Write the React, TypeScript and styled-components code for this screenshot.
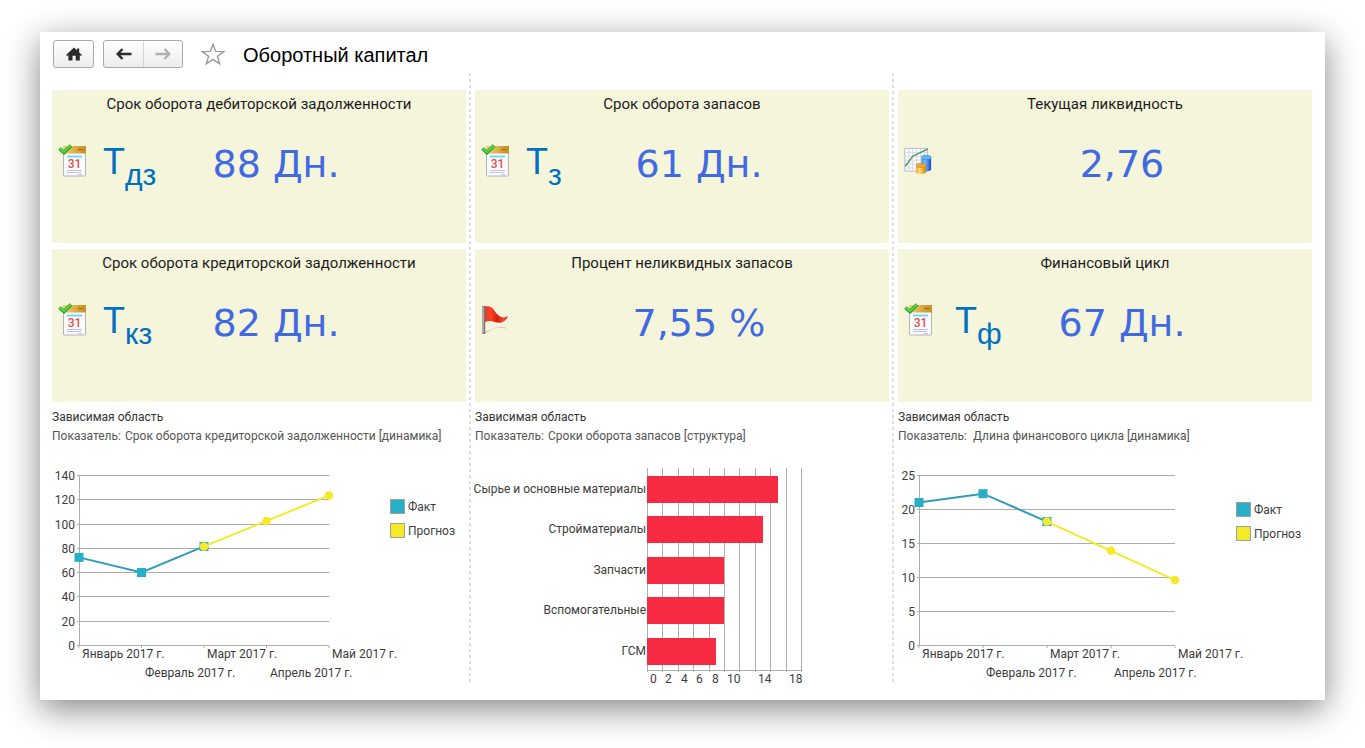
import React from "react";
import styled, { createGlobalStyle } from "styled-components";

const GlobalStyle = createGlobalStyle`
  *, *::before, *::after { box-sizing: border-box; }
  body {
    margin: 0;
    background: #fff;
    color: #333;
    font-family: Roboto, "Liberation Sans", sans-serif;
    font-size: 12px;
    line-height: 20px;
  }
  h1, h2, p { margin: 0; font-weight: 400; }
`;

const Window = styled.main`
  margin: 32px 40px 48px;
  padding: 8px 13px 16px 12px;
  background: #fff;
  box-shadow: 0 9px 32px rgba(0, 0, 0, 0.48);
`;

const Toolbar = styled.header`
  display: flex;
  align-items: center;
  height: 33px;
  padding: 0 0 5px 1px;
`;

const ButtonGroup = styled.div`
  display: flex;
  height: 28px;
  margin-right: 9px;
  border: 1px solid #a9a9a9;
  border-radius: 3px;
  background: linear-gradient(#fff, #ececec);
  overflow: hidden;
`;

const ToolButton = styled.button`
  display: flex;
  align-items: center;
  justify-content: center;
  width: 39px;
  padding: 0;
  border: 0;
  background: none;
  & + & { border-left: 1px solid #d4d4d4; }
`;

const StarButton = styled.button`
  display: flex;
  margin: 0 18px 0 9px;
  padding: 0;
  border: 0;
  background: none;
`;

const Title = styled.h1`
  padding-top: 2px;
  color: #000;
  font-family: "Liberation Sans", Arial, sans-serif;
  font-size: 20px;
  line-height: 28px;
`;

const Board = styled.div`
  display: grid;
  grid-template-columns: minmax(0, 1fr) 9px minmax(0, 1fr) 9px minmax(0, 1fr);
`;

const Divider = styled.div`
  width: 2px;
  margin-left: 3px;
  background: repeating-linear-gradient(#dedede 0 3px, transparent 3px 6px);
`;

const Column = styled.section`
  display: flex;
  flex-direction: column;
  padding-top: 17px;
`;

const Card = styled.article`
  height: 153px;
  margin-bottom: 6px;
  padding-top: 4px;
  background: #f5f5dc;
`;

const CardTitle = styled.h2`
  color: #1c1c1c;
  font-size: 15px;
  line-height: 20px;
  text-align: center;
`;

const CardBody = styled.div`
  display: grid;
  grid-template-columns: 34px 84px minmax(0, 1fr) 84px;
  align-items: center;
  height: 100px;
`;

const IconCell = styled.div`
  display: flex;
  padding: 0 0 6px 6px;
`;

const Symbol = styled.div<{ $indent: number }>`
  grid-column: 2;
  padding: 0 0 4px ${(p) => p.$indent}px;
  color: #0070c0;
  font-family: "Liberation Sans", Arial, sans-serif;
  font-size: 36px;
  line-height: 40px;
  white-space: nowrap;
  sub {
    font-size: 30px;
    line-height: 0;
    vertical-align: -11px;
  }
`;

const Value = styled.p`
  grid-column: 3;
  color: #4169e1;
  font-family: "DejaVu Sans", Verdana, sans-serif;
  font-size: 38px;
  line-height: 48px;
  text-align: center;
  white-space: nowrap;
`;

const Caption = styled.p`
  line-height: 18px;
`;

const Indicator = styled.p<{ $gap: number }>`
  display: flex;
  gap: ${(p) => p.$gap}px;
  color: #555;
  line-height: 21px;
  white-space: nowrap;
`;

const Chart = styled.svg`
  display: block;
  width: 100%;
  height: 237px;
  overflow: visible;
  font-size: 12px;
  fill: #3c3c3c;
`;

function HomeIcon() {
  return (
    <svg width="16" height="14" viewBox="0 0 16 14" fill="#2b2b2b" aria-hidden="true">
      <path d="M8 .5 11 3.300V1.500h2.200v3.900L16 8l-1 .9-1.200-1V13.500H9.700V8.800H6.500v4.700H2.400V7.900L1.100 8.900 0 8z" />
    </svg>
  );
}

function ArrowIcon({ color, back }: { color: string; back?: boolean }) {
  return (
    <svg width="16" height="12" viewBox="0 0 16 12" fill="none" stroke={color} strokeWidth="2.400" aria-hidden="true">
      <path d={back ? "M15.500 6H2M6.500 1 1.700 6l4.800 5" : "M.5 6H14M9.500 1l4.800 5-4.800 5"} />
    </svg>
  );
}

function StarIcon() {
  return (
    <svg width="24" height="22" viewBox="0 0 24 22" fill="#fff" stroke="#999" strokeWidth="1.400" aria-hidden="true">
      <path d="m12 1.200 2.700 7.200 8.200.2-6.500 4.700 2.300 7.500-6.700-4.400-6.700 4.400 2.300-7.500L1.100 8.600l8.200-.2z" />
    </svg>
  );
}

function CalendarIcon() {
  return (
    <svg width="28" height="34" viewBox="0 0 28 34" aria-hidden="true">
      <defs>
        <linearGradient id="calTop" x1="0" x2="1">
          <stop offset="0" stopColor="#f2cf72" />
          <stop offset="1" stopColor="#c68f22" />
        </linearGradient>
      </defs>
      <rect x="5.500" y="3" width="22" height="29" rx="1" fill="#fafaff" stroke="#b4b4bc" />
      <rect x="5" y="2" width="23" height="7.500" fill="url(#calTop)" />
      <path d="M20 5.500h5" stroke="#a77518" strokeWidth="1.500" />
      <path d="M9 12.500h15" stroke="#69dff0" strokeWidth="2" />
      <text x="16.500" y="24" textAnchor="middle" fontSize="12" fontWeight="500" fontFamily="Roboto, sans-serif" fill="#e2503f">31</text>
      <path d="M9 26.500h15M9 28.500h14M20 30.500h4" stroke="#bfc0ee" strokeWidth="1" />
      <path d="m1.500 4.500 4.500 4L13 1.500" fill="none" stroke="#1f9a2a" strokeWidth="3.600" />
      <path d="m1.800 4.500 4.200 3.600L12.700 1.500" fill="none" stroke="#5ad648" strokeWidth="2" />
    </svg>
  );
}

function FlagIcon() {
  return (
    <svg width="30" height="34" viewBox="0 0 30 34" aria-hidden="true">
      <defs>
        <linearGradient id="flagCloth" x1="0" x2="1">
          <stop offset="0" stopColor="#e23a22" />
          <stop offset=".25" stopColor="#ff4527" />
          <stop offset=".55" stopColor="#cf2210" />
          <stop offset=".8" stopColor="#fa4a30" />
          <stop offset="1" stopColor="#c41f10" />
        </linearGradient>
      </defs>
      <path d="M4 31c5-1 8-5 13-5.500 4-.5 7 1 11 .5-4-2-8-2-12-1-5 1.500-8 4-12 4z" fill="#d2d2ba" />
      <path d="M4 2.500c9-1.500 9.500 4.500 14 9 3 3 7 3.500 11 1.500-2 3.500-4.500 7-9.500 7C14 20 11 16 4 19.500z" fill="url(#flagCloth)" />
      <rect x="1.500" y="2" width="3" height="30" fill="#77777a" />
      <path d="M2.500 3v28" stroke="#b9b9bb" />
    </svg>
  );
}

function ReportIcon() {
  return (
    <svg width="32" height="32" viewBox="0 0 32 32" aria-hidden="true">
      <defs>
        <linearGradient id="cylBlue" x1="0" x2="1">
          <stop offset="0" stopColor="#2f8fea" />
          <stop offset=".35" stopColor="#6fc4ff" />
          <stop offset="1" stopColor="#1c45bd" />
        </linearGradient>
        <linearGradient id="cylGold" x1="0" x2="1">
          <stop offset="0" stopColor="#f09a1c" />
          <stop offset=".35" stopColor="#ffe46a" />
          <stop offset="1" stopColor="#d97d0c" />
        </linearGradient>
      </defs>
      <rect x="1" y="1.500" width="26" height="26" fill="#fdfdff" stroke="#a9b3c6" />
      <path d="M5.500 2v25M10 2v25M14.500 2v25M19 2v25M23.500 2v25M1.500 6h25M1.500 10.500h25M1.500 15h25M1.500 19.500h25M1.500 24h25" stroke="#cfd5e2" />
      <path d="M1.500 22 10 10.500 27 2.500" fill="none" stroke="#3f9a48" strokeWidth="1.600" />
      <path d="M20 12v14c2 2.500 9 2.500 11 0V12z" fill="url(#cylBlue)" />
      <ellipse cx="25.500" cy="12" rx="5.500" ry="2.500" fill="#62b4fa" stroke="#2f78d6" strokeWidth=".6" />
      <path d="M14 21v8c2 2.500 9 2.500 11 0v-8z" fill="url(#cylGold)" />
      <ellipse cx="19.500" cy="21" rx="5.500" ry="2.400" fill="#f0a535" stroke="#c97a12" strokeWidth=".6" />
    </svg>
  );
}

const MONTHS = ["Январь 2017 г.", "Февраль 2017 г.", "Март 2017 г.", "Апрель 2017 г.", "Май 2017 г."];
const GRID = "#adadad";
const TEAL = "#27aec8";
const YELLOW = "#f5ea27";

interface LineChartProps {
  label: string;
  left: number;
  max: number;
  step: number;
  fact: number[];
  forecast: number[];
  legendTop: number;
}

function LineChart({ label, left, max, step, fact, forecast, legendTop }: LineChartProps) {
  const right = 277;
  const top = 29;
  const bottom = 199;
  const x = (i: number) => left + ((right - left) * i) / 4;
  const y = (v: number) => bottom - ((bottom - top) * v) / max;
  const rows = Array.from({ length: max / step + 1 }, (_, i) => i * step);
  const offset = fact.length - 1;
  const legend = [
    { name: "Факт", color: TEAL },
    { name: "Прогноз", color: YELLOW },
  ];
  return (
    <Chart role="img" aria-label={label}>
      {rows.map((v) => (
        <g key={v}>
          <line x1={left - 2} x2={right} y1={Math.round(y(v)) - 0.5} y2={Math.round(y(v)) - 0.5} stroke={GRID} />
          <text x={left - 4} y={Math.round(y(v)) + 4} textAnchor="end">{v}</text>
        </g>
      ))}
      <line x1={left + 0.5} x2={left + 0.5} y1={top} y2={bottom} stroke={GRID} />
      {MONTHS.map((m, i) => (
        <g key={m}>
          <line x1={x(i)} x2={x(i)} y1={bottom} y2={bottom + 2} stroke={GRID} />
          <text x={Math.round(x(i)) + 3} y={i % 2 ? 230 : 211}>{m}</text>
        </g>
      ))}
      <polyline points={fact.map((v, i) => `${x(i)},${y(v)}`).join(" ")} fill="none" stroke="#2f9db8" strokeWidth="2" />
      {fact.map((v, i) => (
        <rect key={i} x={x(i) - 4.5} y={y(v) - 4.5} width="9" height="9" fill={TEAL} />
      ))}
      <polyline points={forecast.map((v, i) => `${x(i + offset)},${y(v)}`).join(" ")} fill="none" stroke={YELLOW} strokeWidth="2" />
      {forecast.map((v, i) => (
        <circle key={i} cx={x(i + offset)} cy={y(v)} r="4.300" fill={YELLOW} />
      ))}
      {legend.map((item, i) => (
        <g key={item.name}>
          <rect x="338.500" y={legendTop + i * 24 + 0.5} width="14" height="14" fill={item.color} stroke="#a0a0a0" />
          <text x="356" y={legendTop + i * 24 + 12}>{item.name}</text>
        </g>
      ))}
    </Chart>
  );
}

const STOCK = [
  { name: "Сырье и основные материалы", value: 17 },
  { name: "Стройматериалы", value: 15 },
  { name: "Запчасти", value: 10 },
  { name: "Вспомогательные", value: 10 },
  { name: "ГСМ", value: 9 },
];

function BarChart({ label }: { label: string }) {
  const left = 172;
  const width = 154;
  const top = 21;
  const bottom = 223;
  const x = (v: number) => Math.round(left + (width * v) / 20);
  return (
    <Chart role="img" aria-label={label}>
      {Array.from({ length: 11 }, (_, i) => i * 2).map((v) => (
        <g key={v}>
          <line x1={x(v) + 0.5} x2={x(v) + 0.5} y1={top} y2={bottom + 2} stroke={GRID} />
          {(v <= 10 || v === 14 || v === 18) && <text x={x(v) + 3} y="236">{v}</text>}
        </g>
      ))}
      <line x1={left} x2={left + width + 1} y1={bottom + 0.5} y2={bottom + 0.5} stroke={GRID} />
      {STOCK.map((s, i) => {
        const y = 29 + Math.round(i * 40.4);
        return (
          <g key={s.name}>
            <rect x={left} y={y} width={x(s.value) - left} height="27" fill="#f62b41" />
            <text x={left - 1} y={y + 17} textAnchor="end">{s.name}</text>
          </g>
        );
      })}
    </Chart>
  );
}

interface Kpi {
  title: string;
  icon: React.ReactNode;
  sub?: string;
  indent?: number;
  value: string;
}

interface ColumnData {
  kpis: Kpi[];
  indicator: string;
  gap: number;
  chart: React.ReactNode;
}

const COLUMNS: ColumnData[] = [
  {
    kpis: [
      { title: "Срок оборота дебиторской задолженности", icon: <CalendarIcon />, sub: "дз", value: "88 Дн." },
      { title: "Срок оборота кредиторской задолженности", icon: <CalendarIcon />, sub: "кз", value: "82 Дн." },
    ],
    indicator: "Срок оборота кредиторской задолженности [динамика]",
    gap: 4,
    chart: (
      <LineChart
        label="Срок оборота кредиторской задолженности"
        left={27}
        max={140}
        step={20}
        fact={[73, 60.5, 82]}
        forecast={[82, 103, 124]}
        legendTop={52}
      />
    ),
  },
  {
    kpis: [
      { title: "Срок оборота запасов", icon: <CalendarIcon />, sub: "з", value: "61 Дн." },
      { title: "Процент неликвидных запасов", icon: <FlagIcon />, value: "7,55 %" },
    ],
    indicator: "Сроки оборота запасов [структура]",
    gap: 4,
    chart: <BarChart label="Сроки оборота запасов" />,
  },
  {
    kpis: [
      { title: "Текущая ликвидность", icon: <ReportIcon />, value: "2,76" },
      { title: "Финансовый цикл", icon: <CalendarIcon />, sub: "ф", indent: 23, value: "67 Дн." },
    ],
    indicator: "Длина финансового цикла [динамика]",
    gap: 6,
    chart: (
      <LineChart
        label="Длина финансового цикла"
        left={21}
        max={25}
        step={5}
        fact={[21.1, 22.4, 18.3]}
        forecast={[18.3, 14, 9.7]}
        legendTop={55}
      />
    ),
  },
];

export default function App() {
  return (
    <>
      <GlobalStyle />
      <Window>
        <Toolbar>
          <ButtonGroup>
            <ToolButton aria-label="Домой"><HomeIcon /></ToolButton>
          </ButtonGroup>
          <ButtonGroup>
            <ToolButton aria-label="Назад"><ArrowIcon back color="#2b2b2b" /></ToolButton>
            <ToolButton aria-label="Вперед"><ArrowIcon color="#b0b0b0" /></ToolButton>
          </ButtonGroup>
          <StarButton aria-label="В избранное"><StarIcon /></StarButton>
          <Title>Оборотный капитал</Title>
        </Toolbar>
        <Board>
          {COLUMNS.map((column, i) => (
            <React.Fragment key={column.indicator}>
              {i > 0 && <Divider />}
              <Column>
                {column.kpis.map((kpi) => (
                  <Card key={kpi.title}>
                    <CardTitle>{kpi.title}</CardTitle>
                    <CardBody>
                      <IconCell>{kpi.icon}</IconCell>
                      {kpi.sub && (
                        <Symbol $indent={kpi.indent ?? 17}>
                          Т<sub>{kpi.sub}</sub>
                        </Symbol>
                      )}
                      <Value>{kpi.value}</Value>
                    </CardBody>
                  </Card>
                ))}
                <Caption>Зависимая область</Caption>
                <Indicator $gap={column.gap}>
                  <span>Показатель:</span>
                  <span>{column.indicator}</span>
                </Indicator>
                {column.chart}
              </Column>
            </React.Fragment>
          ))}
        </Board>
      </Window>
    </>
  );
}
